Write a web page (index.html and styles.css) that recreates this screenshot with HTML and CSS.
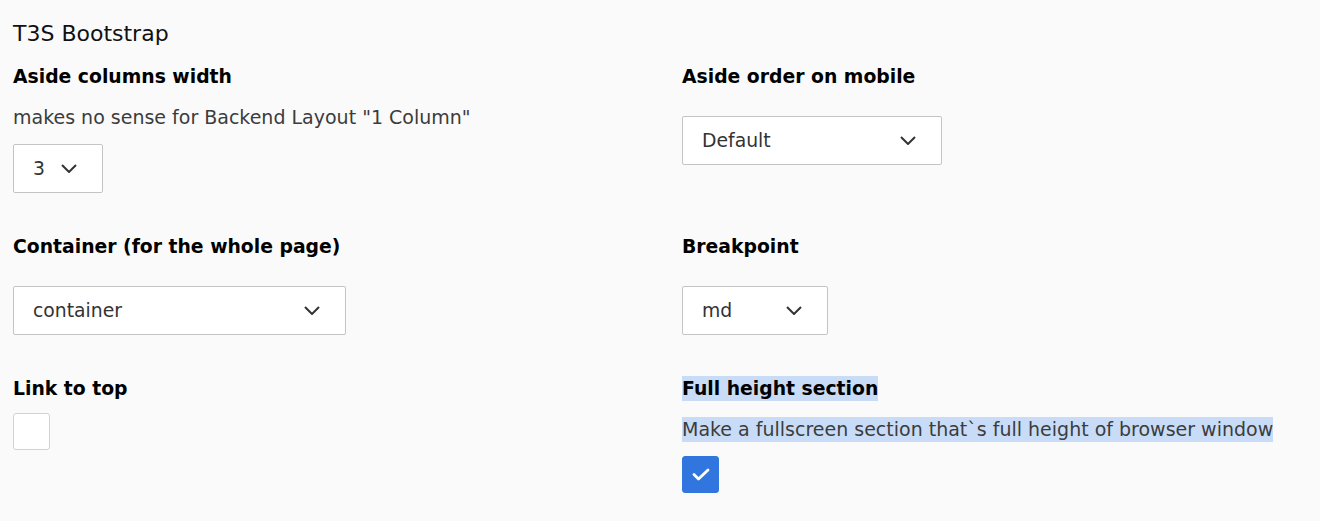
FILE: index.html
```html
<!DOCTYPE html>
<html lang="en">
<head>
<meta charset="utf-8">
<title>T3S Bootstrap</title>
<link rel="stylesheet" href="styles.css">
</head>
<body>
<div class="page">
  <h2 class="title">T3S Bootstrap</h2>
  <div class="grid">
    <div class="field">
      <div class="label">Aside columns width</div>
      <div class="desc">makes no sense for Backend Layout "1 Column"</div>
      <div class="select select--after-desc w-90">
        <span class="value">3</span>
        <svg class="chev" viewBox="0 0 16 9" width="16" height="9"><path d="M1 1l7 7 7-7" fill="none" stroke="#333" stroke-width="2"/></svg>
      </div>
    </div>
    <div class="field">
      <div class="label">Aside order on mobile</div>
      <div class="select select--alone w-260">
        <span class="value">Default</span>
        <svg class="chev" viewBox="0 0 16 9" width="16" height="9"><path d="M1 1l7 7 7-7" fill="none" stroke="#333" stroke-width="2"/></svg>
      </div>
    </div>

    <div class="field">
      <div class="label">Container (for the whole page)</div>
      <div class="select select--alone w-333">
        <span class="value">container</span>
        <svg class="chev" viewBox="0 0 16 9" width="16" height="9"><path d="M1 1l7 7 7-7" fill="none" stroke="#333" stroke-width="2"/></svg>
      </div>
    </div>
    <div class="field">
      <div class="label">Breakpoint</div>
      <div class="select select--alone w-146">
        <span class="value">md</span>
        <svg class="chev" viewBox="0 0 16 9" width="16" height="9"><path d="M1 1l7 7 7-7" fill="none" stroke="#333" stroke-width="2"/></svg>
      </div>
    </div>

    <div class="field">
      <div class="label">Link to top</div>
      <div class="checkbox checkbox--alone"></div>
    </div>
    <div class="field">
      <div class="label"><span class="hl">Full height section</span></div>
      <div class="desc"><span class="hl">Make a fullscreen section that`s full height of browser window</span></div>
      <div class="checkbox checkbox--checked checkbox--after-desc">
        <svg viewBox="0 0 18 13" width="18" height="13"><path d="M2 6.5l4.5 4.5L16 2" fill="none" stroke="#fff" stroke-width="2.8" stroke-linecap="round" stroke-linejoin="round"/></svg>
      </div>
    </div>
  </div>
</div>
</body>
</html>
```
FILE: styles.css
```css
html, body {
  margin: 0;
  padding: 0;
  background: #fafafa;
}

body {
  font-family: "DejaVu Sans", Verdana, sans-serif;
  color: #111;
}

.page {
  padding: 19px 13px 0 13px;
}

.title {
  margin: 0;
  font-size: 22px;
  font-weight: normal;
  line-height: 30px;
  color: #111;
}

.grid {
  margin-top: 15px;
  display: grid;
  grid-template-columns: 669px 1fr;
  row-gap: 41px;
}

.field {
  display: flex;
  flex-direction: column;
  align-items: flex-start;
}

.label {
  font-size: 18.8px;
  font-weight: bold;
  line-height: 25px;
  color: #000;
}

.desc {
  margin-top: 16px;
  font-size: 19px;
  line-height: 25px;
  color: #3c3c3c;
}

.hl {
  display: inline-block;
  background: #c8dcf8;
}

.select {
  box-sizing: border-box;
  height: 49px;
  display: flex;
  align-items: center;
  justify-content: space-between;
  padding: 0 25px 0 19px;
  background: #fff;
  border: 1px solid #c4c4c4;
  border-radius: 2px;
  font-size: 18.8px;
  color: #333;
}

.select--after-desc {
  margin-top: 14px;
}

.select--alone {
  margin-top: 27px;
}

.w-90 { width: 90px; }
.w-146 { width: 146px; }
.w-260 { width: 260px; }
.w-333 { width: 333px; }

.chev {
  display: block;
  flex: none;
}

.checkbox {
  box-sizing: border-box;
  width: 37px;
  height: 37px;
  border-radius: 3px;
  background: #fff;
  border: 1px solid #d2d2d2;
  display: flex;
  align-items: center;
  justify-content: center;
}

.checkbox--alone {
  margin-top: 12px;
}

.checkbox--after-desc {
  margin-top: 14px;
}

.checkbox--checked {
  background: #3176de;
  border-color: #3176de;
}
```
